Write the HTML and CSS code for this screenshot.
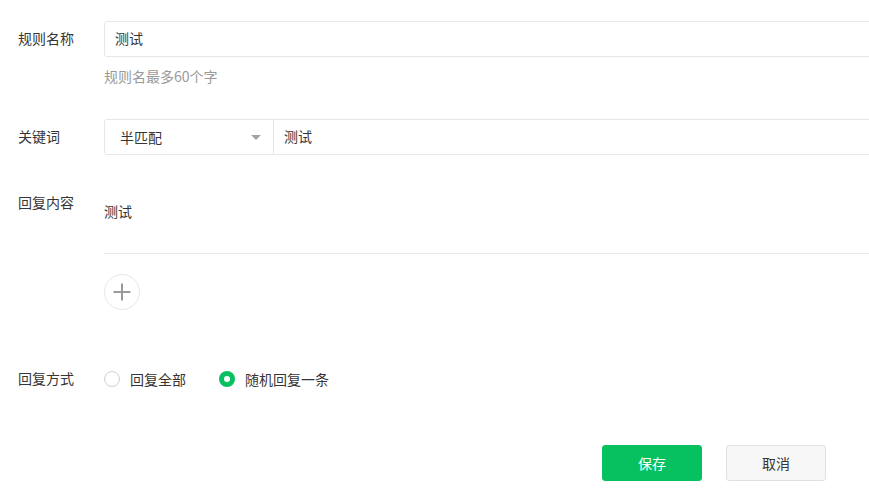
FILE: index.html
```html
<!DOCTYPE html>
<html lang="zh-CN">
<head>
<meta charset="utf-8">
<title>规则</title>
<link rel="stylesheet" href="styles.css">
</head>
<body>
<form class="form">
  <div class="row row-name">
    <label class="label label-input">规则名称</label>
    <div class="field">
      <div class="input"><span class="value">测试</span></div>
      <p class="hint">规则名最多60个字</p>
    </div>
  </div>

  <div class="row row-keyword">
    <label class="label label-input">关键词</label>
    <div class="field">
      <div class="combo">
        <div class="select">
          <span class="value">半匹配</span>
          <span class="arrow"></span>
        </div>
        <div class="combo-input"><span class="value">测试</span></div>
      </div>
    </div>
  </div>

  <div class="row row-content">
    <label class="label">回复内容</label>
    <div class="field">
      <div class="editor"><span class="value">测试</span></div>
      <div class="add">
        <svg width="20" height="20" viewBox="0 0 20 20"><path d="M10 1.5v17M1.5 10h17" stroke="#9a9a9a" stroke-width="2" fill="none"/></svg>
      </div>
    </div>
  </div>

  <div class="row row-mode">
    <label class="label">回复方式</label>
    <div class="field radios">
      <span class="radio"><span class="dot"></span>回复全部</span>
      <span class="radio checked"><span class="dot"></span>随机回复一条</span>
    </div>
  </div>

  <div class="actions">
    <button type="button" class="btn btn-primary">保存</button>
    <button type="button" class="btn btn-default">取消</button>
  </div>
</form>
</body>
</html>
```

FILE: styles.css
```css
* { box-sizing: border-box; }
html, body {
  margin: 0;
  padding: 0;
  background: #fff;
  overflow: hidden;
}
body {
  font-family: "Noto Sans CJK SC", "Microsoft YaHei", "Noto Sans", sans-serif;
  font-size: 14px;
  color: #353535;
  width: 869px;
  height: 501px;
}
.form {
  display: flex;
  flex-direction: column;
  padding-top: 21px;
  overflow: hidden;
}
.row {
  display: flex;
  align-items: flex-start;
}
.label {
  width: 104px;
  flex: none;
  padding-left: 18px;
  line-height: 18px;
  padding-bottom: 2px;
  color: #353535;
}
.label-input {
  line-height: 34px;
  padding-bottom: 2px;
}
.field {
  flex: 1;
  min-width: 0;
  margin-right: -6px;
}
.input {
  height: 36px;
  border: 1px solid #e4e8eb;
  border-radius: 3px;
  padding: 0 10px;
  line-height: 32px;
}
.hint {
  margin: 10px 0 0;
  line-height: 18px;
  padding-bottom: 2px;
  color: #9a9a9a;
}
.row-keyword { margin-top: 32px; }
.combo {
  display: flex;
  height: 36px;
  border: 1px solid #e4e8eb;
  border-radius: 3px;
  line-height: 32px;
}
.select {
  width: 169px;
  flex: none;
  border-right: 1px solid #e4e8eb;
  padding-left: 15px;
  padding-right: 12px;
  display: flex;
  justify-content: space-between;
  align-items: center;
}
.arrow {
  width: 0;
  height: 0;
  border-left: 5px solid transparent;
  border-right: 5px solid transparent;
  border-top: 5px solid #a3a3a3;
  margin-top: 1px;
}
.combo-input {
  flex: 1;
  padding-left: 10px;
}
.row-content { margin-top: 38px; }
.editor {
  height: 61px;
  padding-top: 9px;
  line-height: 18px;
  border-bottom: 1px solid #e4e8eb;
}
.add {
  margin-top: 20px;
  width: 36px;
  height: 36px;
  border: 1px solid #e4e8eb;
  border-radius: 50%;
  display: flex;
  align-items: center;
  justify-content: center;
}
.row-mode { margin-top: 59px; }
.radios {
  display: flex;
  align-items: center;
  gap: 33px;
  line-height: 18px;
  height: 20px;
}
.radio {
  display: flex;
  align-items: center;
  gap: 10px;
}
.dot {
  width: 16px;
  height: 16px;
  border: 1px solid #d0d0d5;
  border-radius: 50%;
  background: #fff;
}
.radio.checked .dot {
  border: 5px solid #07c160;
  background: #fff;
}
.actions {
  display: flex;
  justify-content: flex-end;
  gap: 24px;
  margin-top: 56px;
  padding-right: 43px;
}
.btn {
  width: 100px;
  height: 36px;
  border-radius: 3px;
  font-family: inherit;
  font-size: 14px;
  line-height: 32px;
  padding: 0;
  cursor: pointer;
}
.btn-primary {
  background: #07c160;
  border: 1px solid #07c160;
  color: #fff;
}
.btn-default {
  background: #f7f7f7;
  border: 1px solid #e0e0e0;
  color: #353535;
}
```
